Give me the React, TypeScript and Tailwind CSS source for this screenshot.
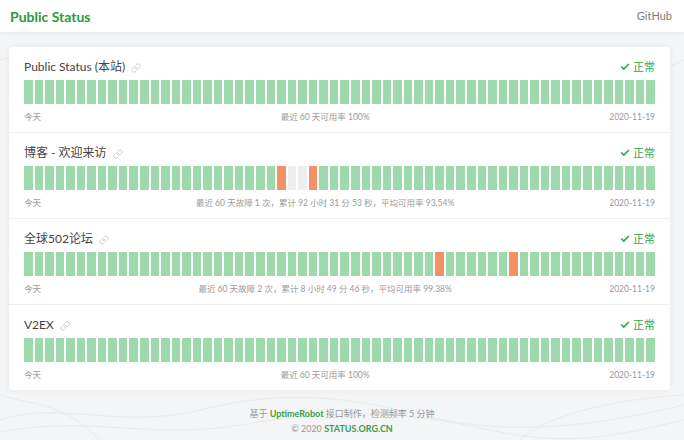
import React from "react";
import { Link, Check } from "lucide-react";

type Site = {
  name: string;
  summary: string;
  down: number[];
  none: number[];
};

const sites: Site[] = [
  { name: "Public Status (本站)", summary: "最近 60 天可用率 100%", down: [], none: [] },
  {
    name: "博客 - 欢迎来访",
    summary: "最近 60 天故障 1 次，累计 92 小时 31 分 53 秒，平均可用率 93.54%",
    down: [24, 27],
    none: [25, 26],
  },
  {
    name: "全球502论坛",
    summary: "最近 60 天故障 2 次，累计 8 小时 49 分 46 秒，平均可用率 99.38%",
    down: [39, 46],
    none: [],
  },
  { name: "V2EX", summary: "最近 60 天可用率 100%", down: [], none: [] },
];

const font = { fontFamily: 'Lato, "Noto Sans CJK SC", sans-serif' };

function Bars({ down, none }: { down: number[]; none: number[] }) {
  return (
    <div className="flex gap-[2px] h-[24px]">
      {Array.from({ length: 60 }).map((_, i) => {
        const cls = down.includes(i)
          ? "bg-[#f29166]"
          : none.includes(i)
          ? "bg-[#eeeeee]"
          : "bg-[#9dd9ab]";
        return <div key={i} className={"flex-1 " + cls} />;
      })}
    </div>
  );
}

function Row({ site, last }: { site: Site; last: boolean }) {
  return (
    <div className={"px-[15px] pt-[12px] pb-[9px] " + (last ? "" : "border-b border-[#f0f0f0]")}>
      <div className="flex items-center justify-between h-[16px] mb-[5px]">
        <div className="flex items-center gap-[6px] text-[12px] text-[#444]">
          <span>{site.name}</span>
          <Link size={10} strokeWidth={2} className="text-[#c4c4c4] mt-[1px]" />
        </div>
        <div className="flex items-center gap-[3px] text-[11px] text-[#2fa84a]">
          <Check size={10} strokeWidth={4} />
          <span>正常</span>
        </div>
      </div>
      <Bars down={site.down} none={site.none} />
      <div className="flex items-center justify-between mt-[7px] h-[12px] text-[8.5px] text-[#9a9a9a]">
        <span>今天</span>
        <span>{site.summary}</span>
        <span>2020-11-19</span>
      </div>
    </div>
  );
}

export default function App() {
  return (
    <div className="w-[684px] h-[440px] bg-[#f4f5f6] overflow-hidden relative" style={font}>
      <svg className="absolute inset-0" width="684" height="440" viewBox="0 0 684 440" fill="none">
        <g stroke="#e8eaec" strokeWidth="1">
          <path d="M0 60 C80 40 140 90 220 70 S380 40 460 70 S620 90 684 60" />
          <path d="M0 420 C60 400 120 430 200 410 S340 395 420 415 S580 430 684 405" />
          <path d="M0 432 C90 415 150 440 240 425 S400 410 480 428 S600 440 684 420" />
          <path d="M520 440 C540 420 600 400 684 395" />
          <path d="M0 395 C30 405 60 400 100 440" />
        </g>
      </svg>
      <div className="relative h-[32px] bg-white shadow-[0_1px_4px_rgba(0,0,0,0.06)] flex items-center justify-between px-[10px]">
        <span className="text-[14px] font-bold text-[#2a9a3e]">Public Status</span>
        <span className="text-[11px] text-[#7a7a7a] pr-[2px]">GitHub</span>
      </div>
      <div className="relative mt-[15px] ml-[9px] w-[661px] bg-white rounded-[3px] shadow-[0_0_6px_rgba(0,0,0,0.06)]">
        {sites.map((s, i) => (
          <Row key={i} site={s} last={i === sites.length - 1} />
        ))}
      </div>
      <div className="relative mt-[16px] flex flex-col items-center text-[9px] text-[#999] leading-[15px]">
        <div>
          基于 <span className="font-bold text-[#3a9d4c]">UptimeRobot</span> 接口制作，检测频率 5 分钟
        </div>
        <div>
          © 2020 <span className="font-bold text-[#3a9d4c]">STATUS.ORG.CN</span>
        </div>
      </div>
    </div>
  );
}
